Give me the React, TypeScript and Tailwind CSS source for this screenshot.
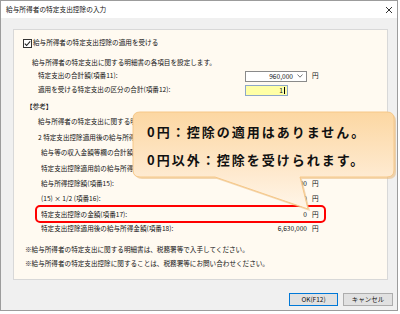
import React from "react";

const Row = ({
  className = "",
  label,
  value,
  unit = true,
  input,
  children,
}: {
  className?: string;
  label: string;
  value?: string;
  unit?: boolean;
  input?: React.ReactNode;
  children?: React.ReactNode;
}) => (
  <div className={`relative flex h-[14px] items-center pr-[68px] ${className}`}>
    <div className="flex-1 overflow-hidden whitespace-nowrap">{label}</div>
    <div className="flex w-[62px] justify-end">{input ?? value}</div>
    <div className="w-[12px] pl-[5px]">{unit ? "円" : ""}</div>
    {children}
  </div>
);

export default function App() {
  return (
    <div className="relative h-[314px] w-[400px] overflow-hidden bg-white [font-family:'Noto_Sans_CJK_JP',sans-serif] text-[6.6px] text-[#111]">
      {/* window */}
      <div className="flex h-[311px] w-[398px] flex-col border border-[#9c9c9c]">
        {/* title bar */}
        <div className="flex h-[17px] items-center justify-between bg-white pl-[5px] pr-[4px]">
          <span className="text-[6.7px] leading-none">給与所得者の特定支出控除の入力</span>
          <svg width="8" height="8" viewBox="0 0 8 8" className="mt-[1px]">
            <path d="M1 1 L7 7 M7 1 L1 7" stroke="#333" strokeWidth="1" />
          </svg>
        </div>
        {/* content */}
        <div className="flex flex-1 flex-col bg-[#f0f0f0]">
          <div className="ml-[12px] mr-[9px] mt-[11px] h-[251px] border border-[#d8d8d8] bg-[#fffaf1] pt-[6px]">
            {/* checkbox row */}
            <div className="flex h-[14px] items-center pl-[9px]">
              <svg width="9" height="9" viewBox="0 0 9 9" className="mr-[1px]">
                <rect x="0.5" y="0.5" width="8" height="8" fill="#fff" stroke="#333" />
                <path d="M1.8 4.6 L3.6 6.5 L7.2 2.3" fill="none" stroke="#222" strokeWidth="1.1" />
              </svg>
              <span>給与所得者の特定支出控除の適用を受ける</span>
            </div>
            <div className="mt-[5px] h-[14px] pl-[18px] leading-[14px] whitespace-nowrap">
              給与所得者の特定支出に関する明細書の各項目を設定します。
            </div>
            <Row
              className="pl-[24px]"
              label="特定支出の合計額(項番11):"
              input={
                <div className="flex h-[11px] w-[62px] items-center justify-end border border-[#8a8a8a] bg-white pr-[3px]">
                  <span className="leading-none">960,000</span>
                  <svg width="6" height="4" viewBox="0 0 6 4" className="ml-[4px]">
                    <path d="M0.5 0.5 L3 3.2 L5.5 0.5" fill="none" stroke="#555" strokeWidth="0.8" />
                  </svg>
                </div>
              }
            />
            <div className="relative flex h-[14px] items-center pl-[24px] pr-[68px]">
              <div className="flex-1 whitespace-nowrap">適用を受ける特定支出の区分の合計(項番12):</div>
              <div className="flex w-[62px] justify-start">
                <div className="flex h-[11px] w-[43px] items-center justify-end border border-[#8da7c9] bg-[#ffffa6] pr-[2px]">
                  <span className="leading-none">1</span>
                  <span className="ml-[1px] h-[7px] w-[1px] bg-black" />
                </div>
              </div>
              <div className="w-[12px]" />
            </div>
            <div className="mt-[2px] h-[14px] pl-[12px] leading-[14px]">【参考】</div>
            <div className="mt-[1px] h-[14px] pl-[24px] leading-[14px] whitespace-nowrap">
              給与所得者の特定支出に関する明細書
            </div>
            <div className="mt-[2px] h-[14px] pl-[24px] leading-[14px] whitespace-nowrap">
              2 特定支出控除適用後の給与所得の金額の計算
            </div>
            <Row className="mt-[2px] pl-[27px]" label="給与等の収入金額等欄の合計額(項番13):" value="" unit={false} />
            <Row className="mt-[2px] pl-[27px]" label="特定支出控除適用前の給与所得金額(項番14):" value="" unit={false} />
            <Row className="mt-[1px] pl-[27px]" label="給与所得控除額(項番15):" value="1,763,000" />
            <Row className="mt-[1px] pl-[27px]" label="(15) × 1/2 (項番16):" value="881,500" />
            <Row className="mt-[2px] pl-[27px]" label="特定支出控除の金額(項番17):" value="0">
              <span className="absolute bottom-[-1px] left-[21px] right-[61px] top-[-3px] rounded-[5px] border-2 border-[#ff0000]" />
            </Row>
            <Row className="pl-[27px]" label="特定支出控除適用後の給与所得金額(項番18):" value="6,630,000" />
            <div className="mt-[6px] h-[14px] pl-[11px] leading-[14px] whitespace-nowrap">
              ※給与所得者の特定支出に関する明細書は、税務署等で入手してください。
            </div>
            <div className="h-[14px] pl-[11px] leading-[14px] whitespace-nowrap">
              ※給与所得者の特定支出控除に関することは、税務署等にお問い合わせください。
            </div>
          </div>
          {/* buttons */}
          <div className="mr-[4px] mt-[13px] flex justify-end gap-[5px]">
            <button className="flex h-[13px] w-[49px] items-center justify-center border border-[#0078d7] bg-[#e1e1e1] text-[6.5px] leading-none">
              OK(F12)
            </button>
            <button className="flex h-[13px] w-[50px] items-center justify-center border border-[#adadad] bg-[#e1e1e1] text-[6.5px] leading-none">
              キャンセル
            </button>
          </div>
        </div>
      </div>

      {/* callout */}
      <div className="absolute left-[130px] top-[109px] h-[105px] w-[270px]">
        <svg width="270" height="105" viewBox="0 0 270 105" className="absolute left-0 top-0">
          <defs>
            <linearGradient id="cg" x1="0" y1="0" x2="0" y2="1">
              <stop offset="0" stopColor="#fcd7a2" />
              <stop offset="0.65" stopColor="#feead0" />
              <stop offset="1" stopColor="#fff6e9" />
            </linearGradient>
          </defs>
          <path
            transform="translate(2,2)"
            d="M10 3 H257 Q264 3 264 10 V61 Q264 68 257 68 H170 L178 100 L85 68 H10 Q3 68 3 61 V10 Q3 3 10 3 Z"
            fill="#e9b878"
            opacity="0.55"
          />
          <path
            d="M10 3 H257 Q264 3 264 10 V61 Q264 68 257 68 H170 L178 100 L85 68 H10 Q3 68 3 61 V10 Q3 3 10 3 Z"
            fill="url(#cg)"
            stroke="#f6c888"
            strokeWidth="1"
          />
        </svg>
        <div className="absolute left-[17px] top-[9px] whitespace-nowrap text-[13px] font-bold leading-[28px] tracking-[2px] text-[#111]">
          <div>0円：控除の適用はありません。</div>
          <div>0円以外：控除を受けられます。</div>
        </div>
      </div>
    </div>
  );
}
